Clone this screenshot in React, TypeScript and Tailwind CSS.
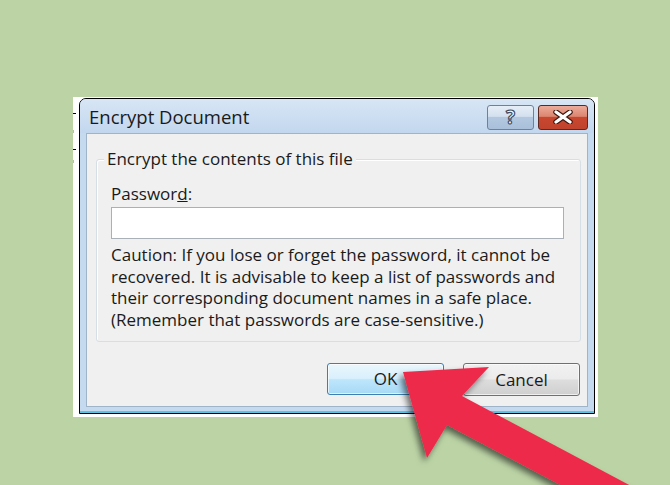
const font = { fontFamily: '"Open Sans", "Noto Sans", sans-serif' };

const Arrow = () => (
  <svg className="absolute left-0 top-0" width="670" height="485" viewBox="0 0 670 485">
    <defs>
      <filter id="sh" x="-20%" y="-20%" width="140%" height="140%">
        <feDropShadow dx="-3" dy="4" stdDeviation="3" floodColor="#000" floodOpacity="0.55" />
      </filter>
    </defs>
    <polygon
      points="403,372 489,367 462,396 772,561 757,589 447,425 427,458"
      fill="#ee2a4c"
      filter="url(#sh)"
    />
  </svg>
);

const App = () => {
  return (
    <div className="relative w-[670px] h-[485px] overflow-hidden bg-[#bbd3a5] pt-[97px] pl-[73px]" style={font}>
      <div className="flex w-[525px] h-[320px] bg-white pt-[1px] pr-[3px] pb-[3px]">
        {/* marks on the pasted strip */}
        <div className="w-[6px] flex flex-col items-start">
          <div className="mt-[15px] w-[3px] h-[1px] bg-black" />
          <div className="mt-[16px] w-[1px] h-[3px] bg-[#e3b56a]" />
          <div className="mt-[16px] w-[3px] h-[1px] bg-black" />
          <div className="mt-[10px] w-[1px] h-[3px] bg-[#e3b56a]" />
        </div>
        <div className="flex-1 flex flex-col border border-black rounded-t-[7px] bg-[#c6daef] overflow-hidden">
          {/* title bar */}
          <div className="h-[34px] flex items-center justify-between pl-[9px] pr-[6px] bg-gradient-to-b from-[#d8e6f5] to-[#c2d7ee]">
            <span className="mt-[3px] text-[18.5px] text-[#1a1a1a] leading-none">Encrypt Document</span>
            <div className="flex gap-[4px] mt-[2px]">
              <div className="w-[47px] h-[25px] rounded-[3px] border border-[#6e8198] bg-[linear-gradient(#e6eef8_0%,#d3e0ee_45%,#b3c8e0_50%,#a9c0db_100%)] flex items-center justify-center">
                <span className="text-[19px] font-bold text-white leading-none [-webkit-text-stroke:1.2px_#3d4d66]">?</span>
              </div>
              <div className="w-[50px] h-[25px] rounded-[3px] border border-[#5b2822] bg-[linear-gradient(#ecab9b_0%,#dc8670_45%,#c9462f_50%,#c0432d_100%)] flex items-center justify-center">
                <svg width="22" height="14" viewBox="0 0 22 14">
                  <path d="M4 2 L18 12 M18 2 L4 12" stroke="#3d1812" strokeWidth="5.5" strokeLinecap="round" />
                  <path d="M4 2 L18 12 M18 2 L4 12" stroke="#ffffff" strokeWidth="3.2" strokeLinecap="round" />
                </svg>
              </div>
            </div>
          </div>
          {/* client */}
          <div className="flex-1 mx-[6px] border border-[#9fb3c9] bg-[#f0f0f0] flex flex-col pl-[9px] pr-[6px] pt-[25px]">
            <div className="relative h-[183px] rounded-[3px] border border-[#d5dfe5] shadow-[inset_1px_1px_0_#ffffff] pl-[14px] pr-[16px]">
              <span className="absolute -top-[11px] left-[7px] px-[3px] bg-[#f0f0f0] text-[17px] leading-[20px] text-[#1a1a1a]">
                Encrypt the contents of this file
              </span>
              <div className="mt-[24px] text-[17px] leading-[20px] text-[#1a1a1a]">
                Passwor<span className="underline">d</span>:
              </div>
              <div className="mt-[3px] h-[32px] border border-[#a9b0b8] bg-white" />
              <p className="mt-[5px] text-[17px] leading-[21.5px] text-[#1a1a1a]">
                Caution: If you lose or forget the password, it cannot be recovered. It is advisable to keep a list of passwords and their corresponding document names in a safe place. (Remember that passwords are case-sensitive.)
              </p>
            </div>
            <div className="flex justify-end gap-[19px] mt-[21px] pr-[1px]">
              <button className="w-[117px] h-[32px] rounded-[3px] border border-[#3c7fb1] bg-[linear-gradient(#eaf6fd_0%,#d9f0fc_48%,#bee6fd_52%,#a7d9f5_100%)] text-[17px] text-[#1a1a1a] shadow-[inset_0_0_0_1px_#ffffffaa]">
                OK
              </button>
              <button className="w-[117px] h-[33px] rounded-[3px] border border-[#707070] bg-[linear-gradient(#f2f2f2_0%,#ebebeb_48%,#dddddd_52%,#cfcfcf_100%)] text-[17px] text-[#1a1a1a] shadow-[inset_0_0_0_1px_#ffffffaa]">
                Cancel
              </button>
            </div>
          </div>
          <div className="h-[6px] bg-[#c6daef] border-b-[2px] border-[#5cc3e3]" />
        </div>
      </div>
      <Arrow />
    </div>
  );
};

export default App;
